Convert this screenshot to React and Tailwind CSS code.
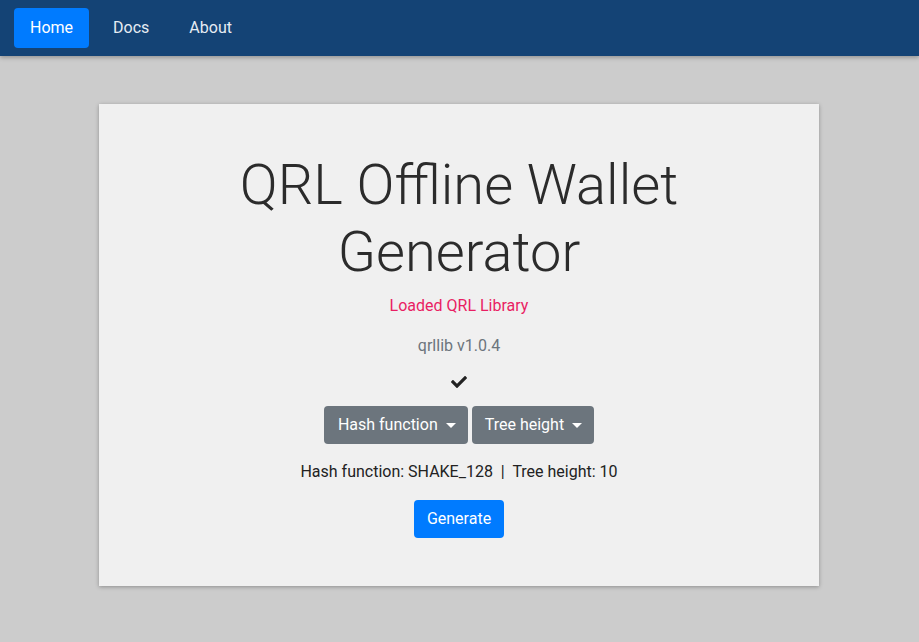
export default function App() {
  return (
    <div className="min-h-[642px] bg-[#cccccc] font-['Roboto',sans-serif]">
      {/* Top nav */}
      <nav className="h-14 bg-[#144375] shadow-[0_2px_4px_rgba(0,0,0,0.25)] flex items-center px-[14px] gap-2">
        <a className="h-10 px-4 rounded bg-[#007bff] text-white flex items-center text-base">
          Home
        </a>
        <a className="h-10 px-4 text-[#e6ecf3] flex items-center text-base">Docs</a>
        <a className="h-10 px-4 text-[#e6ecf3] flex items-center text-base">About</a>
      </nav>

      {/* Card */}
      <div className="pt-12 flex pl-[99px]">
        <div className="w-[720px] bg-[#f0f0f0] shadow-[0_1px_4px_rgba(0,0,0,0.3)] pt-12 pb-12 flex flex-col items-center text-center">
          <h1 className="text-[56px] leading-[67px] font-light text-[#2b2b2b] w-[480px]">
            QRL Offline Wallet Generator
          </h1>
          <p className="mt-[8px] text-base leading-6 text-[#e91e63]">Loaded QRL Library</p>
          <p className="mt-[16px] text-base leading-6 text-[#6c757d]">qrllib v1.0.4</p>
          <svg className="mt-[16px] w-4 h-4 text-[#222]" viewBox="0 0 512 512" fill="currentColor">
            <path d="M173.9 439.4l-166.4-166.4c-10-10-10-26.2 0-36.2l36.2-36.2c10-10 26.2-10 36.2 0L192 312.7 432.1 72.6c10-10 26.2-10 36.2 0l36.2 36.2c10 10 10 26.2 0 36.2l-294.4 294.4c-10 10-26.2 10-36.2 0z" />
          </svg>
          <div className="mt-4 flex gap-1">
            <button className="h-[38px] pl-[14px] pr-[12px] rounded bg-[#6c757d] text-white text-base flex items-center gap-2">
              Hash function
              <span className="border-t-[5px] border-t-white border-x-[5px] border-x-transparent" />
            </button>
            <button className="h-[38px] pl-[13px] pr-[12px] rounded bg-[#6c757d] text-white text-base flex items-center gap-2">
              Tree height
              <span className="border-t-[5px] border-t-white border-x-[5px] border-x-transparent" />
            </button>
          </div>
          <p className="mt-[16px] text-base leading-6 text-[#222]">
            Hash function: SHAKE_128&nbsp; |&nbsp; Tree height: 10
          </p>
          <button className="mt-[16px] h-[38px] px-[13px] rounded bg-[#007bff] text-white text-base">
            Generate
          </button>
        </div>
      </div>
    </div>
  );
}
